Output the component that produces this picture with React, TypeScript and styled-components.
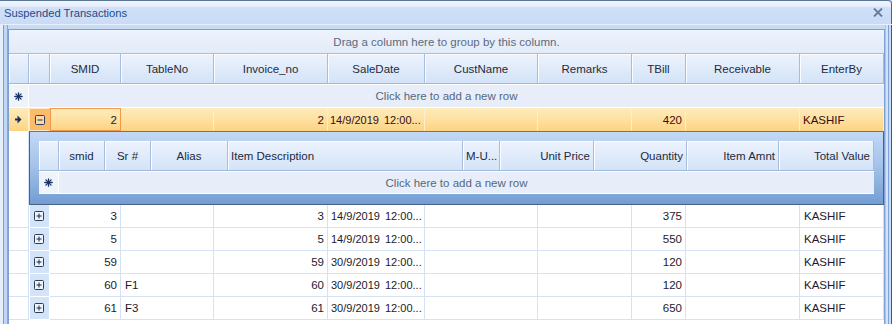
import styled, { createGlobalStyle } from "styled-components";

const GlobalStyle = createGlobalStyle`
    html, body {
        margin: 0;
        padding: 0;
        background: #ffffff;
    }
    body {
        font-family: "Liberation Sans", Arial, sans-serif;
        font-size: 11.5px;
        color: #1b1b2b;
    }
`;

// column widths include each cell's right border
const MAIN_COLS = "20px 21px 71px 93px 114px 97px 113px 94px 54px 114px 84px";
const CHILD_COLS = "20px 46px 46px 77px 235px 37px 94px 93px 92px 95px";

type Align = "left" | "right" | "center";

const justify = (a?: Align) =>
    a === "right" ? "flex-end" : a === "center" ? "center" : "flex-start";

const SWindow = styled.div`
    width: 892px;
    height: 324px;
    overflow: hidden;
    display: flex;
    flex-direction: column;
    background: #c7dbf5;
`;

const STitleBar = styled.div`
    height: 24px;
    box-sizing: border-box;
    border-top: 1px solid #5b7598;
    border-right: 1px solid #4a6489;
    border-top-right-radius: 4px;
    background: linear-gradient(#f1f6fd 0%, #e6eefb 22%, #cfe0f8 30%, #c9dcf6 100%);
    display: flex;
    align-items: center;
    justify-content: space-between;
    padding: 0 8px 0 4px;
    color: #1f4b86;
    font-size: 11.2px;
`;

const SBody = styled.div`
    flex: 1;
    display: flex;
    padding: 4px 7px 0 8px;
    border-top: 1px solid #e9f0fb;
    box-shadow:
        inset 3px 0 0 #e6eefa,
        inset 4px 0 0 #7d9ed0,
        inset 7px 0 0 #c0d6f4,
        inset 8px 0 0 #86a7d8,
        inset -1px 0 0 #3f5a80,
        inset -3px 0 0 #c9dcf6,
        inset -4px 0 0 #7fa2d6,
        inset -6px 0 0 #d2e2f8,
        inset -7px 0 0 #a9c5ec;
`;

const SGrid = styled.div`
    flex: 1;
    border: 1px solid #7e9fd0;
    border-bottom: none;
    background: #ffffff;
    display: flex;
    flex-direction: column;
`;

const SGroupPanel = styled.div`
    height: 24px;
    box-sizing: border-box;
    border-bottom: 1px solid #a8bedc;
    background: linear-gradient(#eef3fc, #e2ebf8);
    display: flex;
    align-items: center;
    justify-content: center;
    color: #5a6a80;
`;

const SRow = styled.div<{ $cols: string; $h: number }>`
    display: grid;
    grid-template-columns: ${(p) => p.$cols};
    height: ${(p) => p.$h}px;
    box-sizing: border-box;
`;

const SHeaderRow = styled(SRow)`
    border-bottom: 1px solid #a1b7d7;
`;

const SHeaderCell = styled.div<{ $align?: Align }>`
    box-sizing: border-box;
    display: flex;
    align-items: center;
    justify-content: ${(p) => justify(p.$align)};
    padding: 0 3px;
    white-space: nowrap;
    overflow: hidden;
    color: #1d2a40;
    border-right: 1px solid #a8bddb;
    background: linear-gradient(#edf3fd 0%, #e0ebfa 50%, #d3e3f8 100%);
    box-shadow: inset 1px 1px 0 #fafcff;
`;

const SNewRow = styled(SRow)`
    border-top: 1px solid #ffffff;
    border-bottom: 1px solid #ffffff;
    background: #e7eef9;
`;

const SNewIndicator = styled.div`
    box-sizing: border-box;
    border-right: 1px solid #ffffff;
    background: #eff4fb;
    display: flex;
    align-items: center;
    justify-content: center;
`;

const SNewText = styled.div`
    display: flex;
    align-items: center;
    justify-content: center;
    padding-right: 20px;
    color: #56677e;
`;

const SSelCell = styled.div<{ $align?: Align }>`
    box-sizing: border-box;
    display: flex;
    align-items: center;
    justify-content: ${(p) => justify(p.$align)};
    padding: 0 3px;
    white-space: nowrap;
    overflow: hidden;
    color: #3a0c14;
    border-right: 1px solid #fdefc9;
    background: linear-gradient(#feebbd 0%, #fde1a0 50%, #fdd383 100%);
`;

const SFocusCell = styled(SSelCell)`
    border: 1px solid #f39847;
    color: #1b1b2b;
`;

const SSelExpand = styled.div`
    box-sizing: border-box;
    display: flex;
    align-items: center;
    justify-content: center;
    background: #fbbb6c;
    border: 1px solid #fde5bf;
    border-right-color: #fbbb6c;
`;

const SDetailRow = styled.div`
    display: grid;
    grid-template-columns: 20px 1fr;
    height: 74px;
`;

const SDetailGutter = styled.div`
    box-sizing: border-box;
    border-right: 1px solid #d5e2f3;
    background: #ffffff;
`;

const SDetailBox = styled.div`
    box-sizing: border-box;
    border: 1px solid #4a6286;
    border-top-color: #5a77a2;
    background: linear-gradient(#c2d8f6 0%, #a6c3ea 45%, #729dd4 100%);
    padding: 9px 9px 0 9px;
`;

const SChildGrid = styled.div`
    background: #ffffff;
    display: flex;
    flex-direction: column;
`;

const SDataCell = styled.div<{ $align?: Align }>`
    box-sizing: border-box;
    display: flex;
    align-items: center;
    justify-content: ${(p) => justify(p.$align)};
    padding: 0 3px 0 4px;
    white-space: nowrap;
    overflow: hidden;
    border-right: 1px solid #d5e2f3;
    border-bottom: 1px solid #d5e2f3;
    background: #ffffff;
`;

const SDateText = styled.span`
    font-size: 11px;
    margin-left: -1px;
    word-spacing: 2px;
`;

const SExpandCell = styled.div`
    box-sizing: border-box;
    display: flex;
    align-items: center;
    justify-content: center;
    background: #d4e4f8;
    border-right: 1px solid #ffffff;
    border-bottom: 1px solid #ffffff;
    box-shadow: inset 1px 0 0 #ffffff;
`;

const ExpandIcon = ({ open }: { open?: boolean }) => (
    <svg width="10" height="10" viewBox="0 0 10 10">
        <rect x="0.5" y="0.5" width="9" height="9" rx="1" fill={open ? "#fcd9a8" : "#eef4fc"} stroke="#2c3d5a" />
        <path d="M2.5 5h5" stroke="#1c2a44" strokeWidth="1" />
        {!open && <path d="M5 2.5v5" stroke="#1c2a44" strokeWidth="1" />}
    </svg>
);

const StarIcon = () => (
    <svg width="9" height="9" viewBox="0 0 9 9">
        <g stroke="#1c3466" strokeWidth="1.3" strokeLinecap="round">
            <path d="M4.5 0.8v7.4" />
            <path d="M0.8 4.5h7.4" />
            <path d="M1.9 1.9l5.2 5.2" />
            <path d="M7.1 1.9l-5.2 5.2" />
        </g>
    </svg>
);

const ArrowIcon = () => (
    <svg width="7" height="9" viewBox="0 0 7 9">
        <path d="M0 3.5h2.5V0.5L6.5 4.5L2.5 8.5V5.5H0z" fill="#1b2f55" />
    </svg>
);

const CloseIcon = () => (
    <svg width="10" height="9" viewBox="0 0 10 9">
        <g stroke="#65799a" strokeWidth="1.8">
            <path d="M1 0.5l8 8" />
            <path d="M9 0.5l-8 8" />
        </g>
    </svg>
);

interface Transaction {
    smid: string;
    tableNo: string;
    invoice: string;
    saleDate: string;
    tbill: string;
}

const rows: Transaction[] = [
    { smid: "3", tableNo: "", invoice: "3", saleDate: "14/9/2019 12:00...", tbill: "375" },
    { smid: "5", tableNo: "", invoice: "5", saleDate: "14/9/2019 12:00...", tbill: "550" },
    { smid: "59", tableNo: "", invoice: "59", saleDate: "30/9/2019 12:00...", tbill: "120" },
    { smid: "60", tableNo: "F1", invoice: "60", saleDate: "30/9/2019 12:00...", tbill: "120" },
    { smid: "61", tableNo: "F3", invoice: "61", saleDate: "30/9/2019 12:00...", tbill: "650" },
];

const mainHeaders = ["SMID", "TableNo", "Invoice_no", "SaleDate", "CustName", "Remarks", "TBill", "Receivable", "EnterBy"];

const childHeaders: { label: string; align: Align }[] = [
    { label: "smid", align: "center" },
    { label: "Sr #", align: "center" },
    { label: "Alias", align: "center" },
    { label: "Item Description", align: "left" },
    { label: "M-U...", align: "left" },
    { label: "Unit Price", align: "right" },
    { label: "Quantity", align: "right" },
    { label: "Item Amnt", align: "right" },
    { label: "Total Value", align: "right" },
];

const App = () => {
    return (
        <>
            <GlobalStyle />
            <SWindow>
                <STitleBar>
                    <span>Suspended Transactions</span>
                    <CloseIcon />
                </STitleBar>
                <SBody>
                    <SGrid>
                        <SGroupPanel>Drag a column here to group by this column.</SGroupPanel>

                        <SHeaderRow $cols={MAIN_COLS} $h={30}>
                            <SHeaderCell />
                            <SHeaderCell />
                            {mainHeaders.map((h) => (
                                <SHeaderCell key={h} $align="center">{h}</SHeaderCell>
                            ))}
                        </SHeaderRow>

                        <SNewRow $cols="20px 1fr" $h={24}>
                            <SNewIndicator><StarIcon /></SNewIndicator>
                            <SNewText>Click here to add a new row</SNewText>
                        </SNewRow>

                        <SRow $cols={MAIN_COLS} $h={23}>
                            <SSelCell $align="center"><ArrowIcon /></SSelCell>
                            <SSelExpand><ExpandIcon open /></SSelExpand>
                            <SFocusCell $align="right">2</SFocusCell>
                            <SSelCell />
                            <SSelCell $align="right">2</SSelCell>
                            <SSelCell><SDateText>14/9/2019 12:00...</SDateText></SSelCell>
                            <SSelCell />
                            <SSelCell />
                            <SSelCell $align="right">420</SSelCell>
                            <SSelCell />
                            <SSelCell>KASHIF</SSelCell>
                        </SRow>

                        <SDetailRow>
                            <SDetailGutter />
                            <SDetailBox>
                                <SChildGrid>
                                    <SHeaderRow $cols={CHILD_COLS} $h={30}>
                                        <SHeaderCell />
                                        {childHeaders.map((h) => (
                                            <SHeaderCell key={h.label} $align={h.align}>{h.label}</SHeaderCell>
                                        ))}
                                    </SHeaderRow>
                                    <SNewRow $cols="20px 1fr" $h={23}>
                                        <SNewIndicator><StarIcon /></SNewIndicator>
                                        <SNewText>Click here to add a new row</SNewText>
                                    </SNewRow>
                                </SChildGrid>
                            </SDetailBox>
                        </SDetailRow>

                        {rows.map((r) => (
                            <SRow key={r.smid} $cols={MAIN_COLS} $h={23}>
                                <SDataCell />
                                <SExpandCell><ExpandIcon /></SExpandCell>
                                <SDataCell $align="right">{r.smid}</SDataCell>
                                <SDataCell>{r.tableNo}</SDataCell>
                                <SDataCell $align="right">{r.invoice}</SDataCell>
                                <SDataCell><SDateText>{r.saleDate}</SDateText></SDataCell>
                                <SDataCell />
                                <SDataCell />
                                <SDataCell $align="right">{r.tbill}</SDataCell>
                                <SDataCell />
                                <SDataCell>KASHIF</SDataCell>
                            </SRow>
                        ))}
                    </SGrid>
                </SBody>
            </SWindow>
        </>
    );
};

export default App;
